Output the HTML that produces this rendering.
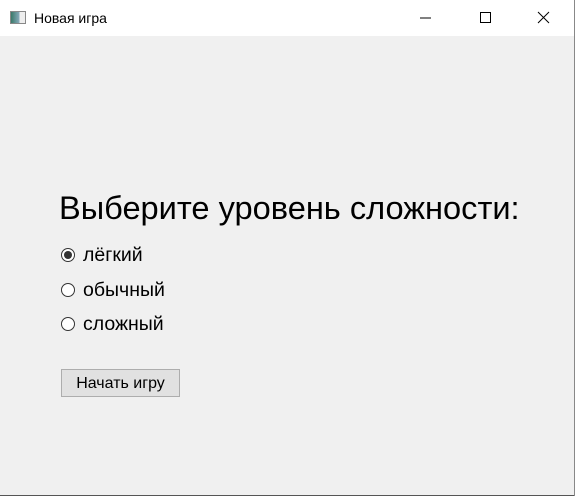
<!DOCTYPE html>
<html><head><meta charset="utf-8"><style>
body{margin:0;width:575px;height:496px;overflow:hidden;background:#f0f0f0;font-family:"Liberation Sans","DejaVu Sans",sans-serif;position:relative}
.tb{position:absolute;left:0;top:0;width:575px;height:36px;background:#fff}
.t{position:absolute;left:34px;top:10px;font-size:14px;color:#000}
.ic{position:absolute;left:10px;top:11px;width:14px;height:11px;border:1px solid #888;background:linear-gradient(90deg,#3a7a6a,#8ab 60%,#eee 60%)}
.h{position:absolute;left:59px;top:189px;font-size:32.6px;color:#000;white-space:nowrap;letter-spacing:0px}
.r{position:absolute;left:61px;width:14px;height:14px;border:1px solid #333;border-radius:50%;background:#fff;box-sizing:border-box}
.r.on::after{content:"";position:absolute;left:2px;top:2px;width:8px;height:8px;border-radius:50%;background:#333}
.l{position:absolute;left:83px;font-size:19.5px;color:#000}
.btn{position:absolute;left:61px;top:369px;width:119px;height:28px;box-sizing:border-box;border:1px solid #adadad;background:#e1e1e1;font-size:16px;text-align:center;line-height:27px}
.edge{position:absolute;left:0;top:495px;width:575px;height:1px;background:#555}
.redge{position:absolute;left:574px;top:0;width:1px;height:496px;background:#888}
</style></head><body>
<div class="tb"><div class="ic"></div><div class="t">Новая игра</div>
<svg style="position:absolute;left:418px;top:10px" width="140" height="16"><line x1="2" y1="8" x2="13" y2="8" stroke="#000"/><rect x="62.5" y="2.5" width="10" height="10" fill="none" stroke="#000"/><path d="M120 2L131 13M131 2L120 13" stroke="#000"/></svg></div>
<div class="h">Выберите уровень сложности:</div>
<div class="r on" style="top:248px"></div><div class="l" style="top:244px">лёгкий</div>
<div class="r" style="top:283px"></div><div class="l" style="top:279px">обычный</div>
<div class="r" style="top:317px"></div><div class="l" style="top:313px">сложный</div>
<div class="btn">Начать игру</div>
<div class="edge"></div><div class="redge"></div>
</body></html>
